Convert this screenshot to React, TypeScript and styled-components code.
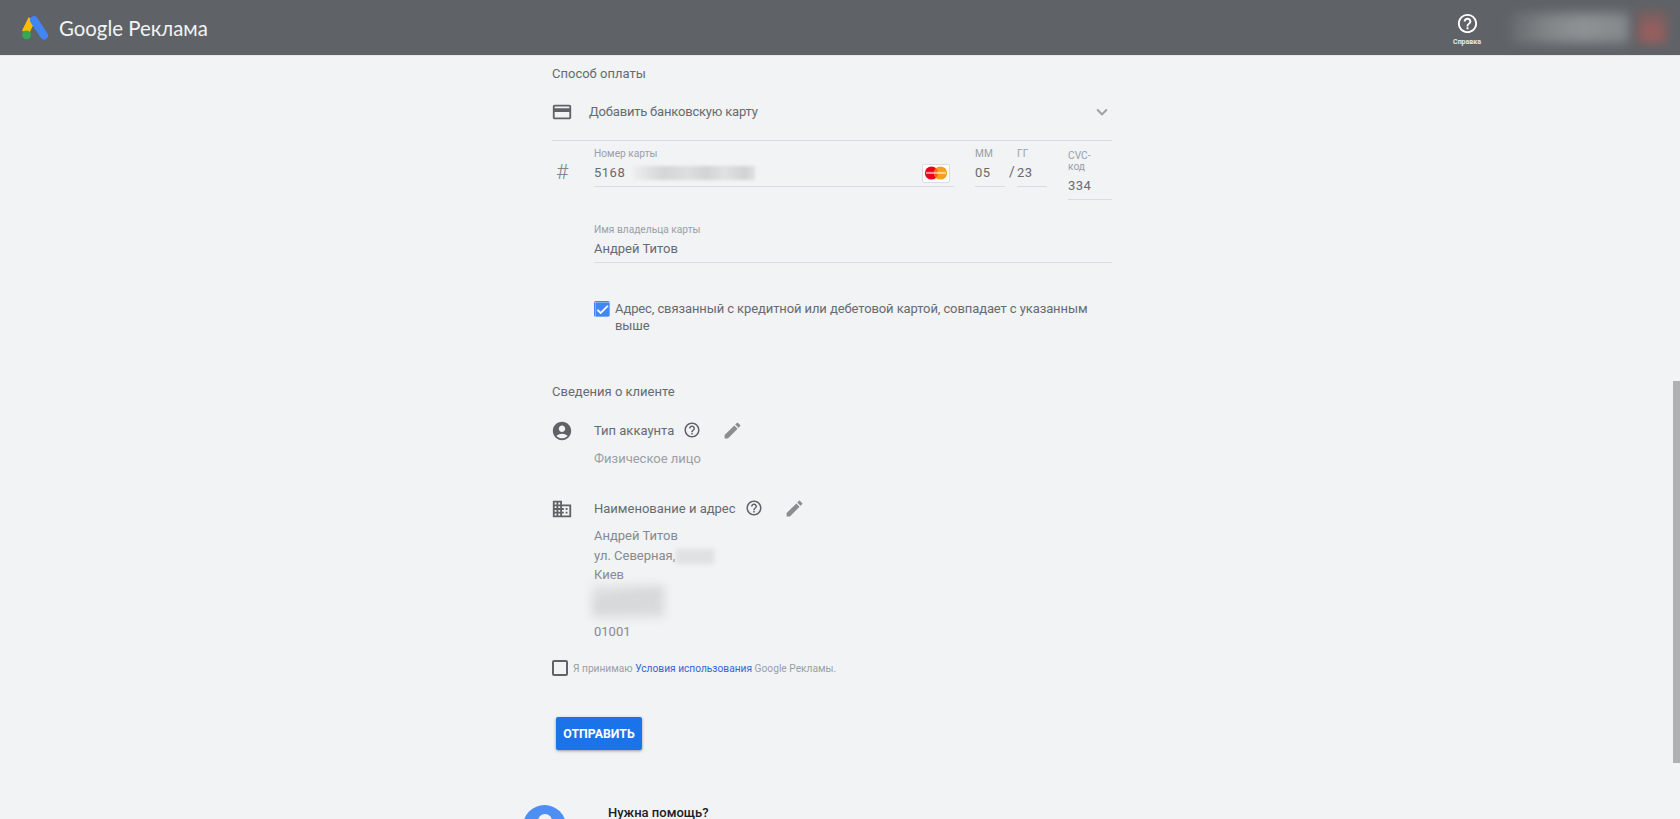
import React, { FC, ReactNode } from 'react'
import styled, { createGlobalStyle } from 'styled-components'
import { MdAccountCircle, MdCheck, MdCreditCard, MdDomain, MdEdit, MdHelpOutline, MdKeyboardArrowDown } from 'react-icons/md'

const GlobalStyle = createGlobalStyle`
  html, body {
    margin: 0;
    height: 100%;
    overflow: hidden;
    background: #f1f3f4;
    font-family: Roboto, "Liberation Sans", sans-serif;
    color: #676b70;
  }
  * { box-sizing: border-box; }
`

const AdsLogo: FC = () => (
  <svg width="26" height="24" viewBox="0 0 26 24">
    <path d="M10 3 L3.4 16.4" stroke="#fbbc04" strokeWidth="7.6" fill="none" />
    <path d="M12 4.2 L22 19.4" stroke="#4285f4" strokeWidth="8" strokeLinecap="round" fill="none" />
    <circle cx="4.6" cy="18.8" r="4.4" fill="#34a853" />
  </svg>
)

const MasterCard: FC = () => (
  <CardBadge>
    <svg width="24" height="14" viewBox="0 0 24 14">
      <circle cx="7.5" cy="7" r="6.6" fill="#eb001b" />
      <circle cx="16.5" cy="7" r="6.6" fill="#f79e1b" />
      <path d="M12 2.2 a6.6 6.6 0 0 1 0 9.6 a6.6 6.6 0 0 1 0 -9.6" fill="#ff5f00" />
      <rect x="2" y="5.8" width="20" height="2.2" fill="#fff" opacity="0.55" />
    </svg>
  </CardBadge>
)

interface FieldProps {
  label: ReactNode
  width?: number
  offset?: number
  tall?: boolean
  spaced?: boolean
  children: ReactNode
}

const Field: FC<FieldProps> = ({ label, width, offset, tall, spaced, children }) => (
  <FieldBox $width={width} $offset={offset} $tall={tall}>
    <FieldLabel>{label}</FieldLabel>
    <FieldValue $spaced={spaced}>{children}</FieldValue>
  </FieldBox>
)

const HeadingWithActions: FC<{ children: ReactNode }> = ({ children }) => (
  <InfoHeading>
    <span>{children}</span>
    <HelpIcon><MdHelpOutline /></HelpIcon>
    <PencilIcon><MdEdit /></PencilIcon>
  </InfoHeading>
)

export default function App() {
  return (
    <Page>
      <GlobalStyle />
      <Header>
        <Brand>
          <AdsLogo />
          <BrandName>Google Реклама</BrandName>
        </Brand>
        <HeaderHelp>
          <MdHelpOutline />
          <span>Справка</span>
        </HeaderHelp>
        <BlurredName />
        <BlurredAvatar />
      </Header>
      <Column>
        <SectionTitle>Способ оплаты</SectionTitle>
        <CardSelect>
          <MethodIcon $width={38}><MdCreditCard /></MethodIcon>
          <CardSelectText>Добавить банковскую карту</CardSelectText>
          <Chevron><MdKeyboardArrowDown /></Chevron>
        </CardSelect>
        <CardRow>
          <Hash>#</Hash>
          <Field label="Номер карты" width={360} spaced>
            <NumberValue>
              <span>5168</span>
              <BlurredNumber />
              <MasterCard />
            </NumberValue>
          </Field>
          <Field label="ММ" width={30} offset={21} spaced>05</Field>
          <Slash>/</Slash>
          <Field label="ГГ" width={30} spaced>23</Field>
          <Field label={<>CVC-<br />код</>} width={44} offset={21} tall spaced>334</Field>
        </CardRow>
        <HolderRow>
          <Field label="Имя владельца карты">Андрей Титов</Field>
        </HolderRow>
        <SameAddress>
          <CheckedBox><MdCheck /></CheckedBox>
          <span>Адрес, связанный с кредитной или дебетовой картой, совпадает с указанным выше</span>
        </SameAddress>
        <ClientTitle>Сведения о клиенте</ClientTitle>
        <InfoRow>
          <MethodIcon $width={43}><MdAccountCircle /></MethodIcon>
          <div>
            <HeadingWithActions>Тип аккаунта</HeadingWithActions>
            <InfoText>Физическое лицо</InfoText>
          </div>
        </InfoRow>
        <AddressRow>
          <MethodIcon $width={43}><MdDomain /></MethodIcon>
          <div>
            <HeadingWithActions>Наименование и адрес</HeadingWithActions>
            <AddressLines>
              <AddressLine>Андрей Титов</AddressLine>
              <AddressLine>ул. Северная,<BlurredStreet /></AddressLine>
              <AddressLine>Киев</AddressLine>
              <BlurredRegion />
              <AddressLine>01001</AddressLine>
            </AddressLines>
          </div>
        </AddressRow>
        <TermsRow>
          <EmptyBox />
          <span>Я принимаю <TermsLink href="#">Условия использования</TermsLink> Google Рекламы.</span>
        </TermsRow>
        <SubmitButton type="button">Отправить</SubmitButton>
        <HelpBlock>
          <HelpBubble><HelpHead /></HelpBubble>
          <HelpTitle>Нужна помощь?</HelpTitle>
        </HelpBlock>
      </Column>
      <ScrollThumb />
    </Page>
  )
}

const Page = styled.div`
  position: relative;
  height: 100vh;
  overflow: hidden;
`

const Header = styled.header`
  display: flex;
  align-items: center;
  height: 56px;
  padding: 0 12px 1px 22px;
  background: #5f6368;
  border-bottom: 1px solid #e4e6e8;
`

const Brand = styled.div`
  display: flex;
  align-items: center;
  gap: 11px;
  flex: 1;
  margin-top: 2px;
`

const BrandName = styled.span`
  font-family: Lato, Roboto, sans-serif;
  font-size: 20.4px;
  color: #f1f3f4;
`

const HeaderHelp = styled.div`
  display: flex;
  flex-direction: column;
  align-items: center;
  width: 40px;
  margin-right: 24px;
  color: #fff;
  svg { font-size: 23px; margin-top: 3px; }
  span { font-size: 7px; font-weight: 700; margin-top: 3px; color: #e8eaed; }
`

const BlurredName = styled.div`
  width: 118px;
  height: 30px;
  margin: 2px 7px 0 0;
  background: linear-gradient(100deg, #666a6e 0%, #84888b 35%, #8e9294 60%, #84888c 100%);
  filter: blur(6px);
`

const BlurredAvatar = styled.div`
  width: 32px;
  height: 36px;
  background: radial-gradient(circle at 50% 65%, #a05f5d 0%, #7d5f60 60%, #655f62 100%);
  filter: blur(4px);
`

const Column = styled.main`
  width: 560px;
  margin-left: 552px;
`

const SectionTitle = styled.h2`
  margin: 8px 0 0;
  font-size: 13px;
  font-weight: 400;
  line-height: 20px;
  color: #676b70;
`

const CardSelect = styled.div`
  display: flex;
  align-items: center;
  height: 57px;
  padding-bottom: 1px;
  border-bottom: 1px solid #dadce0;
`

const MethodIcon = styled.span<{ $width: number }>`
  display: flex;
  flex: none;
  width: ${({ $width }) => $width}px;
  margin-left: -1px;
  font-size: 22px;
  color: #5f6368;
`

const CardSelectText = styled.span`
  flex: 1;
  font-size: 13px;
  letter-spacing: -0.2px;
`

const Chevron = styled.span`
  display: flex;
  font-size: 22px;
  color: #9aa0a6;
  margin-right: -1px;
`

const CardRow = styled.div`
  display: flex;
  align-items: flex-start;
`

const Hash = styled.span`
  width: 42px;
  padding: 21px 0 0 4px;
  font-size: 21px;
  font-weight: 300;
  line-height: 20px;
  color: #80868b;
`

const FieldBox = styled.div<{ $width?: number; $offset?: number; $tall?: boolean }>`
  width: ${({ $width }) => ($width ? `${$width}px` : '100%')};
  margin-left: ${({ $offset }) => $offset ?? 0}px;
  margin-top: ${({ $tall }) => ($tall ? 7 : 5)}px;
`

const FieldLabel = styled.div`
  font-size: 10.2px;
  line-height: 11px;
  padding-top: 2px;
  color: #9aa0a6;
`

const FieldValue = styled.div<{ $spaced?: boolean }>`
  height: 28px;
  padding-top: 4px;
  font-size: 13px;
  line-height: 20px;
  letter-spacing: ${({ $spaced }) => ($spaced ? '0.5px' : '0')};
  color: #676b70;
  border-bottom: 1px solid #dadce0;
`

const NumberValue = styled.div`
  display: flex;
  align-items: center;
  height: 20px;
`

const BlurredNumber = styled.span`
  width: 122px;
  height: 14px;
  margin-left: 8px;
  background: linear-gradient(90deg, #eceef0 0%, #d3d5d7 25%, #dcdee0 45%, #d1d3d5 60%, #dfe1e2 75%, #d0d2d4 92%, #e0e2e3 100%);
  filter: blur(1.5px);
`

const CardBadge = styled.span`
  display: flex;
  align-items: center;
  justify-content: center;
  width: 28px;
  height: 19px;
  margin: 0 4px 0 auto;
  background: #fff;
  border: 1px solid #dadce0;
  border-radius: 2px;
`

const Slash = styled.span`
  width: 12px;
  padding: 21px 0 0 4px;
  font-size: 14px;
  line-height: 20px;
`

const HolderRow = styled.div`
  margin: 22px 0 0 42px;
  width: 518px;
`

const SameAddress = styled.label`
  display: flex;
  gap: 5px;
  margin: 37px 0 0 42px;
  font-size: 13px;
  line-height: 17px;
  letter-spacing: -0.1px;
  color: #676b70;
`

const CheckedBox = styled.span`
  display: flex;
  align-items: center;
  justify-content: center;
  flex: none;
  width: 16px;
  height: 16px;
  margin-top: 1px;
  border-radius: 2px;
  background: #4285f4;
  color: #fff;
  font-size: 15px;
  svg { stroke: currentColor; stroke-width: 1; }
`

const ClientTitle = styled(SectionTitle)`
  margin-top: 48px;
`

const InfoRow = styled.div`
  display: flex;
  align-items: flex-start;
  margin-top: 18px;
`

const AddressRow = styled(InfoRow)`
  margin-top: 29px;
`

const InfoHeading = styled.div`
  display: flex;
  align-items: center;
  height: 20px;
  font-size: 13px;
  color: #676b70;
`

const HelpIcon = styled.span`
  display: flex;
  margin-left: 9px;
  font-size: 18px;
  color: #5f6368;
`

const PencilIcon = styled.span`
  display: flex;
  margin-left: 21px;
  font-size: 21px;
  color: #8a8e92;
`

const InfoText = styled.div`
  margin-top: 9px;
  font-size: 13px;
  line-height: 20px;
  color: #9aa0a6;
`

const AddressLines = styled.div`
  margin-top: 8px;
  font-size: 13px;
  color: #868a8f;
`

const AddressLine = styled.div`
  display: flex;
  height: 19.5px;
  line-height: 19.5px;
`

const BlurredStreet = styled.span`
  width: 38px;
  height: 15px;
  margin: 3px 0 0 1px;
  background: #dfe1e2;
  filter: blur(2px);
`

const BlurredRegion = styled.div`
  width: 72px;
  height: 32px;
  margin: 0 0 5px -2px;
  background: linear-gradient(170deg, #e4e6e7 0%, #d6d8da 40%, #dadcdd 100%);
  filter: blur(5px);
`

const TermsRow = styled.div`
  display: flex;
  align-items: center;
  gap: 5px;
  margin-top: 19px;
  font-size: 10.2px;
  color: #9aa0a6;
`

const EmptyBox = styled.span`
  flex: none;
  width: 16px;
  height: 16px;
  border: 2px solid #5f6368;
  border-radius: 2px;
`

const TermsLink = styled.a`
  color: #3367d6;
  text-decoration: none;
`

const SubmitButton = styled.button`
  display: block;
  width: 86px;
  height: 33px;
  margin: 41px 0 0 4px;
  padding: 0;
  border: 0;
  border-radius: 2px;
  background: #1a73e8;
  color: #fff;
  font-family: inherit;
  font-size: 12.3px;
  font-weight: 700;
  text-transform: uppercase;
  box-shadow: 0 1px 3px rgba(60, 64, 67, 0.5);
`

const HelpBlock = styled.div`
  display: flex;
  margin: 55px 0 0 -29px;
  height: 60px;
  gap: 42px;
`

const HelpBubble = styled.div`
  display: flex;
  justify-content: center;
  width: 43px;
  height: 43px;
  padding-top: 9px;
  border-radius: 50%;
  background: #4d8ff5;
`

const HelpHead = styled.div`
  width: 14px;
  height: 14px;
  border-radius: 50%;
  background: #f1f3f4;
`

const HelpTitle = styled.div`
  font-size: 13px;
  font-weight: 500;
  line-height: 16px;
  color: #202124;
`

const ScrollThumb = styled.div`
  position: absolute;
  right: 0;
  top: 381px;
  width: 7px;
  height: 382px;
  background: #b0b1b2;
`
